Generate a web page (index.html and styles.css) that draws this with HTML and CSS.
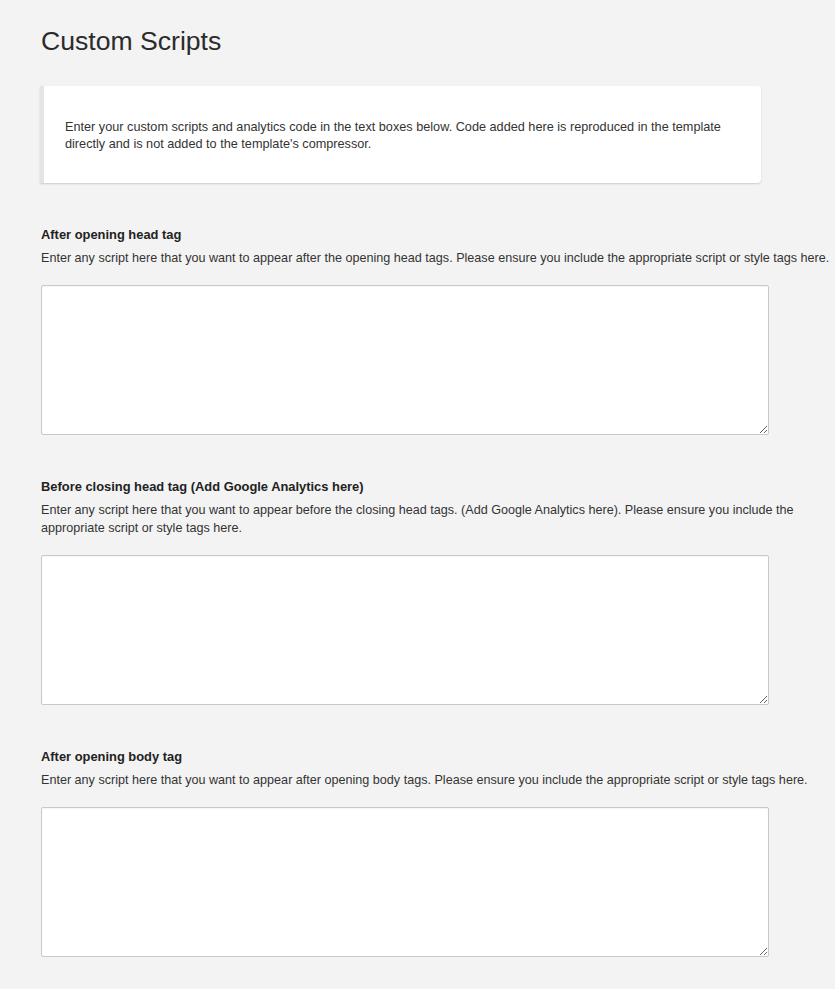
FILE: index.html
```html
<!DOCTYPE html>
<html lang="en">
<head>
<meta charset="utf-8">
<title>Custom Scripts</title>
<link rel="stylesheet" href="styles.css">
</head>
<body>
<main class="page">
  <h1 class="title">Custom Scripts</h1>
  <div class="notice">
    <p>Enter your custom scripts and analytics code in the text boxes below. Code added here is reproduced in the template directly and is not added to the template's compressor.</p>
  </div>

  <section class="field">
    <h2 class="label">After opening head tag</h2>
    <p class="desc">Enter any script here that you want to appear after the opening head tags. Please ensure you include the appropriate script or style tags here.</p>
    <textarea class="code"></textarea>
  </section>

  <section class="field">
    <h2 class="label">Before closing head tag (Add Google Analytics here)</h2>
    <p class="desc">Enter any script here that you want to appear before the closing head tags. (Add Google Analytics here). Please ensure you include the appropriate script or style tags here.</p>
    <textarea class="code"></textarea>
  </section>

  <section class="field">
    <h2 class="label">After opening body tag</h2>
    <p class="desc">Enter any script here that you want to appear after opening body tags. Please ensure you include the appropriate script or style tags here.</p>
    <textarea class="code"></textarea>
  </section>
</main>
</body>
</html>
```

FILE: styles.css
```css
html, body {
  margin: 0;
  padding: 0;
  background: #f3f3f3;
  overflow-x: hidden;
}

body {
  font-family: "Liberation Sans", Arial, Helvetica, sans-serif;
  color: #333;
}

.page {
  padding: 26px 0 40px 41px;
}

.title {
  margin: 0;
  font-size: 26.6px;
  font-weight: normal;
  line-height: 30px;
  color: #2b2b2b;
}

.notice {
  margin: 30px 0 0 -1px;
  width: 675px;
  background: #fff;
  border-left: 4px solid #e4e4e4;
  border-radius: 0 4px 4px 0;
  box-shadow: 0 1px 2px rgba(0, 0, 0, 0.16);
  padding: 33px 21px 30px 21px;
}

.notice p {
  margin: 0;
  font-size: 12.7px;
  line-height: 17px;
  color: #333;
}

.field {
  margin-top: 43px;
}

.label {
  margin: 0;
  font-size: 12.9px;
  font-weight: bold;
  line-height: 18px;
  color: #222;
}

.desc {
  margin: 5px 0 0 0;
  font-size: 12.6px;
  line-height: 18px;
  color: #333;
}

.code {
  display: block;
  box-sizing: border-box;
  margin-top: 18px;
  width: 728px;
  height: 150px;
  border: 1px solid #c9c9c9;
  border-radius: 2px;
  background: #fff;
  box-shadow: inset 0 1px 1px rgba(0, 0, 0, 0.04);
  resize: both;
  padding: 6px;
  font-family: "Liberation Mono", monospace;
  font-size: 12px;
}
```
